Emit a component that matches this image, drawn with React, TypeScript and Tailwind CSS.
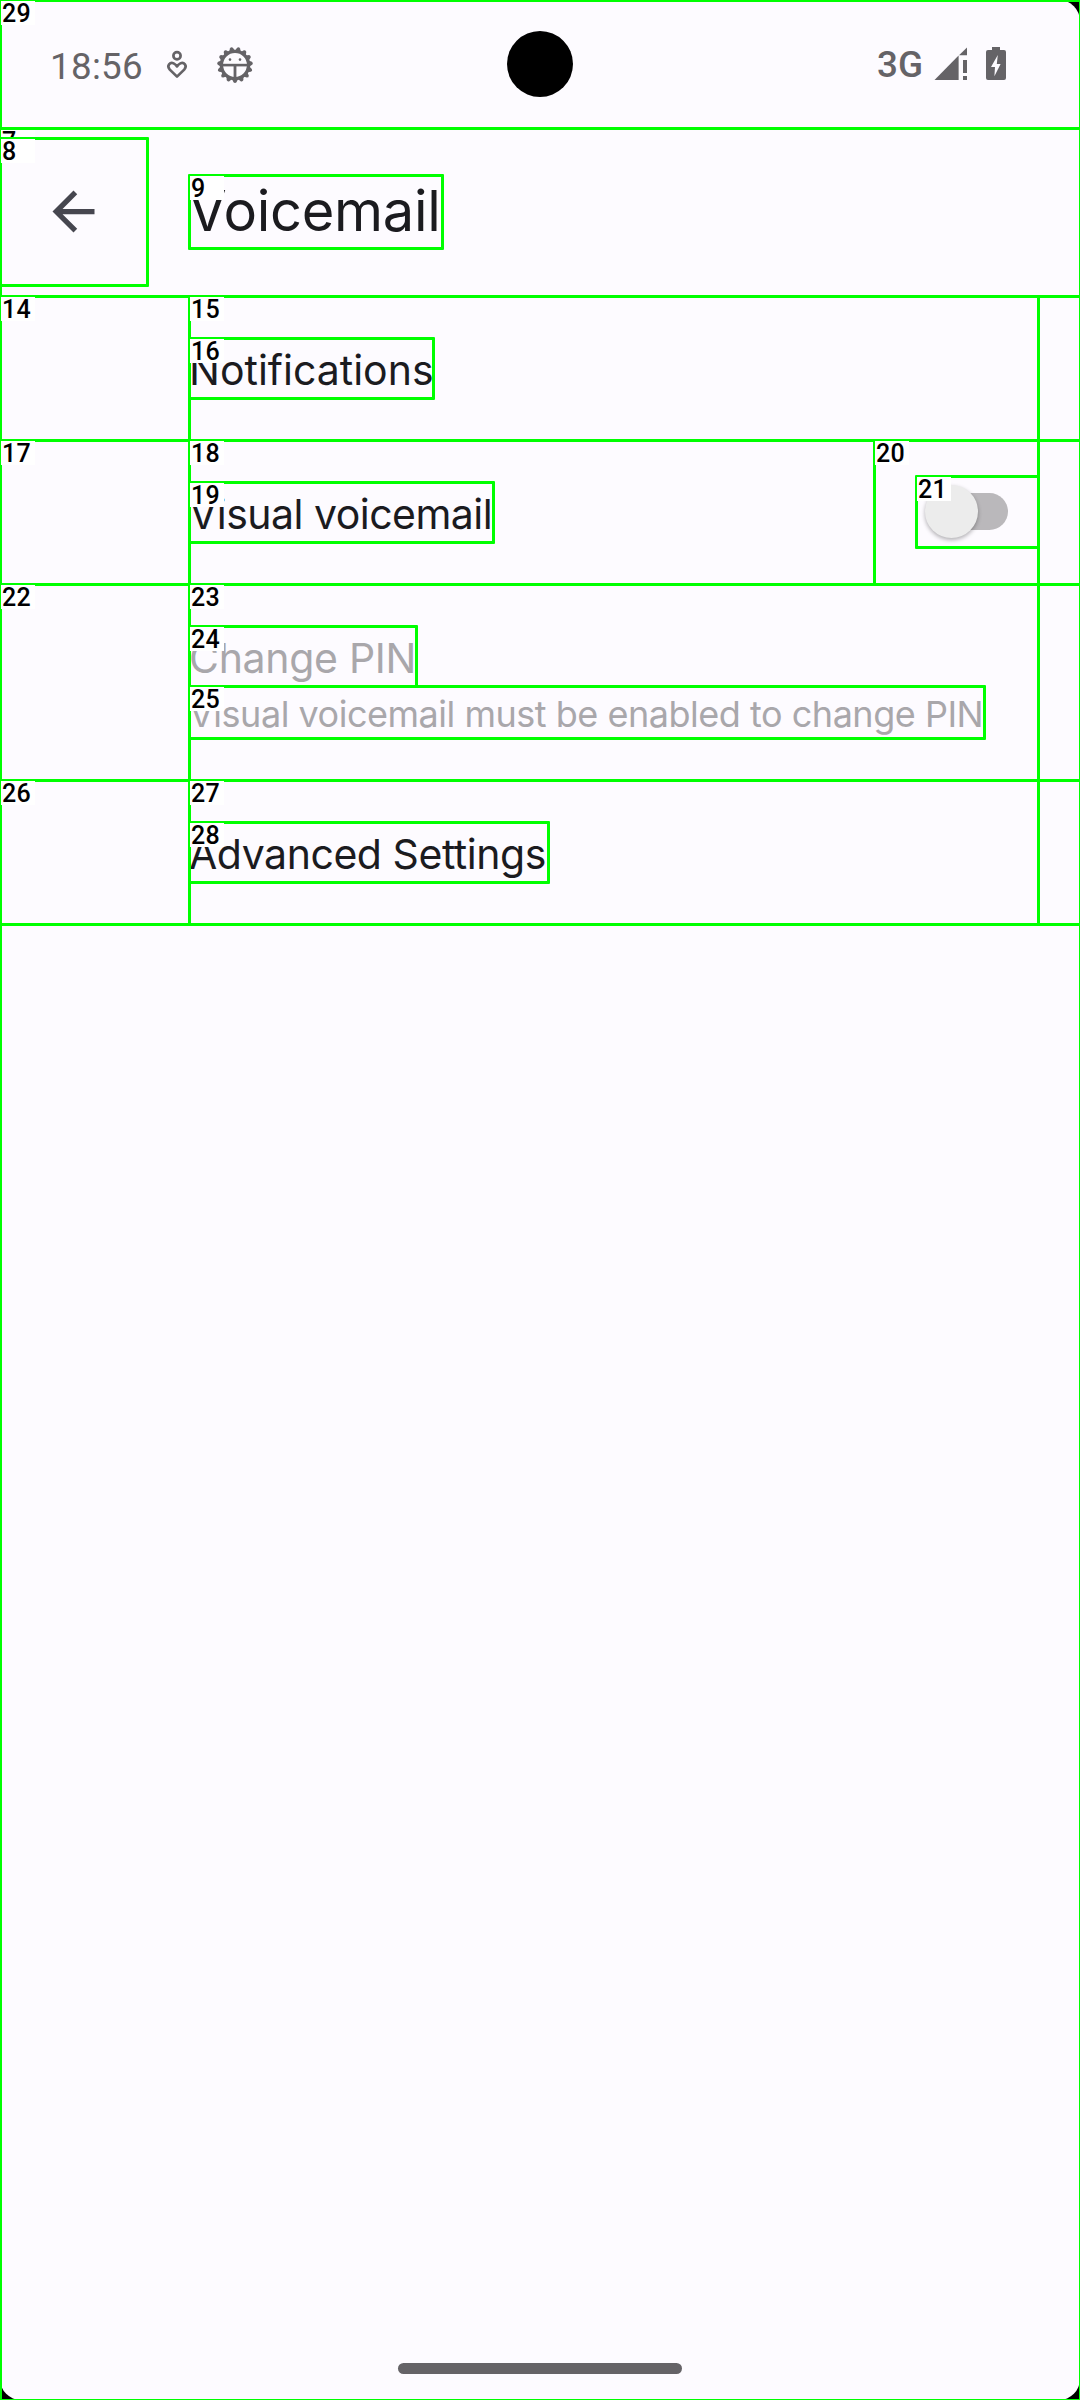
import React from "react";

/* Inspector frames drawn over the screen: [x1, y1, x2, y2, label] */
type Frame = [number, number, number, number, string];
const frames: Frame[] = [
  [0, 0, 1080, 2400, ""],
  [0, 128, 1080, 296, "7"],
  [0, 138, 147, 285, "8"],
  [189, 175, 442, 248, "9"],
  [0, 296, 1080, 440, "14"],
  [189, 296, 1038, 440, "15"],
  [189, 338, 433, 398, "16"],
  [0, 440, 1080, 584, "17"],
  [189, 440, 874, 584, "18"],
  [189, 482, 493, 542, "19"],
  [874, 440, 1038, 584, "20"],
  [916, 476, 1038, 547, "21"],
  [0, 584, 1080, 780, "22"],
  [189, 584, 1038, 780, "23"],
  [189, 626, 416, 686, "24"],
  [189, 686, 984, 738, "25"],
  [0, 780, 1080, 924, "26"],
  [189, 780, 1038, 924, "27"],
  [189, 822, 548, 882, "28"],
  [0, 0, 1080, 128, "29"],
];

function FrameOverlay() {
  return (
    <div className="pointer-events-none absolute inset-0 overflow-hidden">
      {frames.map(([x1, y1, x2, y2, label], i) => (
        <React.Fragment key={i}>
          <div
            className="absolute rounded-[1px] border-[3px] border-[#00ff00]"
            style={{ left: x1 - 1, top: y1 - 1, width: x2 - x1 + 3, height: y2 - y1 + 3 }}
          />
          {label && (
            <div
              className="absolute h-6 w-[34px] bg-white pl-px font-['Roboto'] text-[25px] leading-[26px] font-medium tracking-[0.3px] text-black"
              style={{ left: x1 + 1, top: y1 + 1 }}
            >
              {label}
            </div>
          )}
        </React.Fragment>
      ))}
    </div>
  );
}

function HeartPersonIcon() {
  return (
    <svg width="24" height="32" viewBox="0 0 24 32" fill="none" stroke="#656367" strokeWidth="2.7" className="shrink-0">
      <circle cx="12" cy="5.7" r="3.6" />
      <path d="M12 26.6 L4.8 19.6 C1.2 15.6 5.2 11.8 8.6 13.4 Q10.6 14.4 12 16.4 Q13.4 14.4 15.4 13.4 C18.8 11.8 22.8 15.6 19.2 19.6 Z" strokeLinejoin="round" />
    </svg>
  );
}

function GearFaceIcon() {
  const teeth = Array.from({ length: 15 }, (_, i) => 180 + i * 24);
  return (
    <svg width="38" height="38" viewBox="-19 -19 38 38" fill="#656367" className="shrink-0">
      <circle r="13.6" fill="none" stroke="#656367" strokeWidth="3.4" />
      {teeth.map((a) => (
        <path key={a} d="M-3 -14 L-1.5 -17.2 Q0 -18.8 1.5 -17.2 L3 -14 Z" transform={`rotate(${a})`} />
      ))}
      <rect x="-13" y="-1.2" width="26" height="2.6" />
      <rect x="-1.4" y="0" width="2.8" height="13" />
      <circle cx="-5" cy="-5.4" r="1.3" />
      <circle cx="5" cy="-5.4" r="1.3" />
    </svg>
  );
}

function SignalIcon() {
  return (
    <svg width="34" height="34" viewBox="0 0 34 34" fill="#656367" className="shrink-0">
      <path d="M0.5 33 L24.6 8.6 V33 Z" />
      <path d="M25 8.2 L33 0.4 V8.2 Z" />
      <rect x="29" y="13" width="4" height="13" />
      <rect x="29" y="29" width="4" height="4" />
    </svg>
  );
}

function BatteryIcon() {
  return (
    <svg width="20" height="33" viewBox="0 0 20 33" className="shrink-0">
      <path d="M6 0 H14 V3 H18 Q20 3 20 5 V31 Q20 33 18 33 H2 Q0 33 0 31 V5 Q0 3 2 3 H6 Z" fill="#656367" />
      <path d="M11.8 8 L5 20 H9 L8.4 29.3 L14.6 17 H10.8 Z" fill="#fdfbff" />
    </svg>
  );
}

function StatusBar() {
  return (
    <div className="relative flex h-32 items-start text-[#656367]">
      <div className="flex flex-1 items-start pl-[50px]">
        <div className="mt-[47px] w-[115px] font-['Roboto'] text-[36.75px] leading-10 tracking-[0.3px]">18:56</div>
        <div className="mt-[50px]"><HeartPersonIcon /></div>
        <div className="mt-[46px] ml-[27px]"><GearFaceIcon /></div>
      </div>
      <div className="flex items-start pr-[74px]">
        <div className="mt-[45px] w-[57px] font-['Roboto'] text-[36.75px] leading-10 font-medium">3G</div>
        <div className="mt-[47px]"><SignalIcon /></div>
        <div className="mt-[47px] ml-[18px]"><BatteryIcon /></div>
      </div>
      <div className="absolute top-[31px] left-[507px] size-[66px] rounded-full bg-black" />
    </div>
  );
}

function Row({ title, children }: { title: React.ReactNode; children?: React.ReactNode }) {
  return (
    <div className="flex h-36 items-start pl-[189px]">
      <div className="flex-1 pt-11 text-[41px] leading-[60px] text-[#1b1b1f]">{title}</div>
      {children}
    </div>
  );
}

function Switch() {
  return (
    <div className="mt-[44px] mr-[72px] flex h-[54px] w-[83px] items-center">
      <div className="relative ml-[8px] h-[37px] w-[75px] rounded-full bg-[#bab8bb]">
        <div className="absolute -top-2 -left-2 size-[53px] rounded-full bg-[#ececec] shadow-[0_2px_4px_rgba(0,0,0,0.3)]" />
      </div>
    </div>
  );
}

export default function App() {
  return (
    <div className="relative h-[2400px] w-[1080px] overflow-hidden bg-black">
      <div className="flex h-full w-full flex-col rounded-[21px] bg-[#fdfbff] font-['Inter',sans-serif] font-normal">
        <StatusBar />
        <header className="flex h-[168px] items-center">
          <div className="flex w-[188px] pb-0.5 pl-[42px]">
            <svg width="63" height="63" viewBox="0 0 24 24" fill="#46464f">
              <path d="M20 11H7.83l5.59-5.59L12 4l-8 8 8 8 1.41-1.41L7.83 13H20v-2z" />
            </svg>
          </div>
          <h1 className="pb-0.5 text-[56px] leading-[73px] tracking-[-0.3px] text-[#1b1b1f]">Voicemail</h1>
        </header>
        <main className="flex-1">
          <Row title="Notifications" />
          <Row title={<span className="tracking-[-0.52px]">Visual voicemail</span>}>
            <Switch />
          </Row>
          <div className="h-[196px] pt-11 pl-[189px] text-[#a9a7ab]">
            <div className="text-[41px] leading-[60px] tracking-[-0.3px]">Change PIN</div>
            <div className="text-[36px] leading-[52px] tracking-[-0.48px] whitespace-nowrap">Visual voicemail must be enabled to change PIN</div>
          </div>
          <Row title={<span className="tracking-[-0.45px]">Advanced Settings</span>} />
        </main>
        <div className="flex justify-center pb-[26px]">
          <div className="h-[11px] w-[284px] rounded-full bg-[#656367]" />
        </div>
      </div>
      <FrameOverlay />
    </div>
  );
}
